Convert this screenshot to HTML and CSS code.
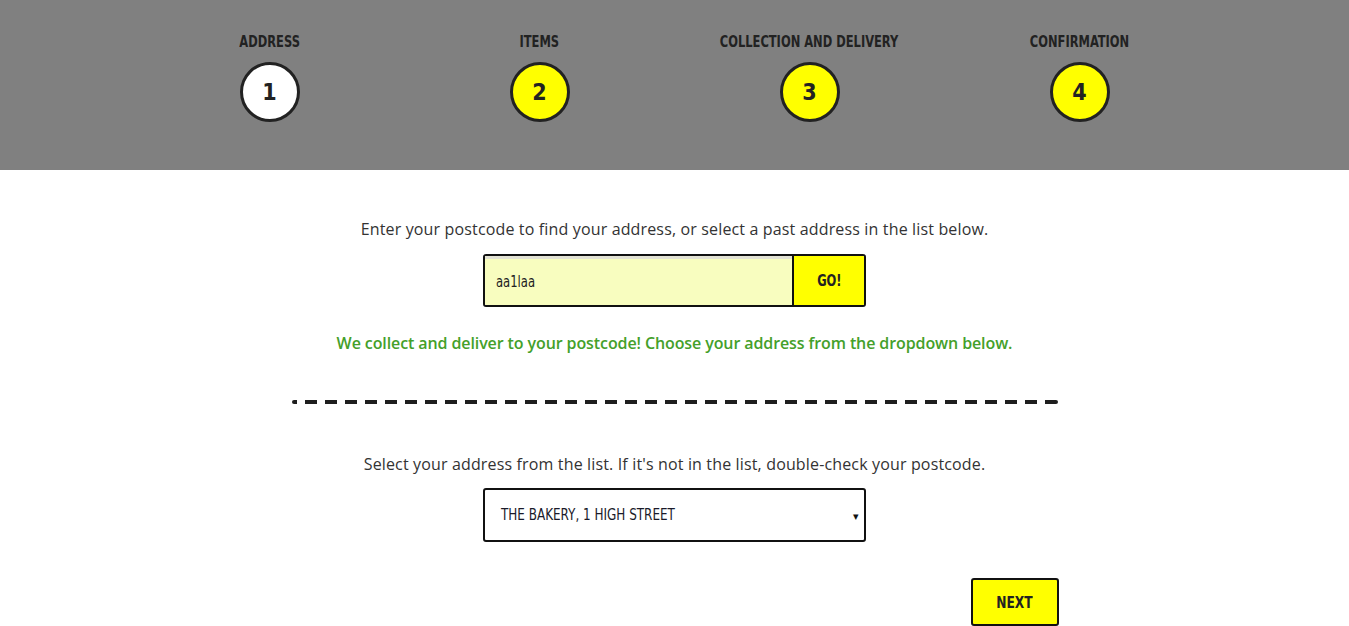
FILE: index.html
```html
<!DOCTYPE html>
<html lang="en">
<head>
<meta charset="utf-8">
<title>Address</title>
<link rel="stylesheet" href="styles.css">
</head>
<body>
<header class="steps-bar">
  <ol class="steps">
    <li class="step step-current"><span class="step-label">ADDRESS</span><span class="step-circle">1</span></li>
    <li class="step"><span class="step-label">ITEMS</span><span class="step-circle">2</span></li>
    <li class="step"><span class="step-label">COLLECTION AND DELIVERY</span><span class="step-circle">3</span></li>
    <li class="step"><span class="step-label">CONFIRMATION</span><span class="step-circle">4</span></li>
  </ol>
</header>
<main class="content">
  <p class="intro">Enter your postcode to find your address, or select a past address in the list below.</p>
  <form class="postcode-form">
    <div class="postcode-input"><span class="narrow">aa1laa</span></div>
    <button class="go-btn" type="button"><span class="btn-text">GO!</span></button>
  </form>
  <p class="success">We collect and deliver to your postcode! Choose your address from the dropdown below.</p>
  <div class="divider"></div>
  <p class="intro select-intro">Select your address from the list. If it's not in the list, double-check your postcode.</p>
  <div class="select-box">
    <span class="select-value narrow">THE BAKERY, 1 HIGH STREET</span>
    <span class="select-arrow">&#9662;</span>
  </div>
  <div class="actions">
    <button class="next-btn" type="button"><span class="btn-text">NEXT</span></button>
  </div>
</main>
</body>
</html>
```
FILE: styles.css
```css
* { box-sizing: border-box; }
html, body { margin: 0; padding: 0; }
body {
  font-family: "Open Sans", "Noto Sans", sans-serif;
  color: #333;
  background: #fff;
}
.steps-bar {
  background: #808080;
  height: 170px;
  padding-top: 33px;
}
.steps {
  list-style: none;
  margin: 0 auto;
  padding: 0;
  width: 1080px;
  display: grid;
  grid-template-columns: repeat(4, 1fr);
}
.step {
  display: flex;
  flex-direction: column;
  align-items: center;
}
.step-label {
  display: inline-block;
  white-space: nowrap;
  font-family: "DejaVu Sans Condensed", "DejaVu Sans", sans-serif;
  font-weight: bold;
  font-size: 15px;
  line-height: 18px;
  color: #222;
  transform: scaleX(0.85);
}
.step-circle {
  margin-top: 11px;
  width: 60px;
  height: 60px;
  border-radius: 50%;
  border: 3px solid #222;
  background: #ffff00;
  display: flex;
  align-items: center;
  justify-content: center;
  font-family: "DejaVu Sans Condensed", "DejaVu Sans", sans-serif;
  font-weight: bold;
  font-size: 23px;
  color: #222;
}
.step-current .step-circle { background: #fff; }

.content {
  display: flex;
  flex-direction: column;
  align-items: center;
  padding-top: 49px;
}
.intro {
  margin: 0;
  font-size: 16px;
  line-height: 20px;
  letter-spacing: 0.15px;
  color: #333;
}
.narrow {
  display: inline-block;
  font-family: "DejaVu Sans Condensed", "DejaVu Sans", sans-serif;
  transform: scaleX(0.86);
  transform-origin: left center;
}
.btn-text {
  display: inline-block;
  transform: scaleX(0.85);
}
.postcode-form {
  margin-top: 15px;
  width: 383px;
  height: 53px;
  display: flex;
  border: 2px solid #111;
  border-radius: 3px;
  overflow: hidden;
}
.postcode-input {
  flex: 1;
  min-width: 0;
  display: flex;
  align-items: center;
  border-top: 3px solid #e2e2d4;
  background: #f8fdbf;
  padding: 0 11px;
  font-size: 15px;
  color: #222;
}
.go-btn {
  width: 72px;
  border: 0;
  border-left: 2px solid #111;
  background: #ffff00;
  font-family: "DejaVu Sans Condensed", sans-serif;
  font-weight: bold;
  font-size: 15px;
  color: #222;
  padding: 0;
}
.success {
  margin: 26px 0 0;
  font-size: 16px;
  line-height: 20px;
  font-weight: 600;
  letter-spacing: -0.1px;
  color: #44a02a;
}
.divider {
  margin-top: 47px;
  width: 766px;
  height: 4px;
  border-radius: 2px;
  background-image: repeating-linear-gradient(to right, #1e1e1e 0 12px, transparent 12px 20px);
  background-position: -7px 0;
}
.select-intro { margin-top: 50px; }
.select-box {
  margin-top: 14px;
  width: 383px;
  height: 54px;
  border: 2px solid #111;
  border-radius: 3px;
  display: flex;
  align-items: center;
  justify-content: space-between;
  padding: 0 5px 0 16px;
}
.select-value {
  font-size: 15.5px;
  color: #1a1a2a;
  white-space: nowrap;
}
.select-arrow {
  font-size: 11px;
  color: #111;
}
.actions {
  width: 766px;
  display: flex;
  justify-content: flex-end;
  margin-top: 36px;
}
.next-btn {
  margin-right: -1px;
  width: 88px;
  height: 48px;
  border: 2px solid #111;
  border-radius: 3px;
  background: #ffff00;
  font-family: "DejaVu Sans Condensed", sans-serif;
  font-weight: bold;
  font-size: 16px;
  color: #222;
  padding: 0;
}
```
